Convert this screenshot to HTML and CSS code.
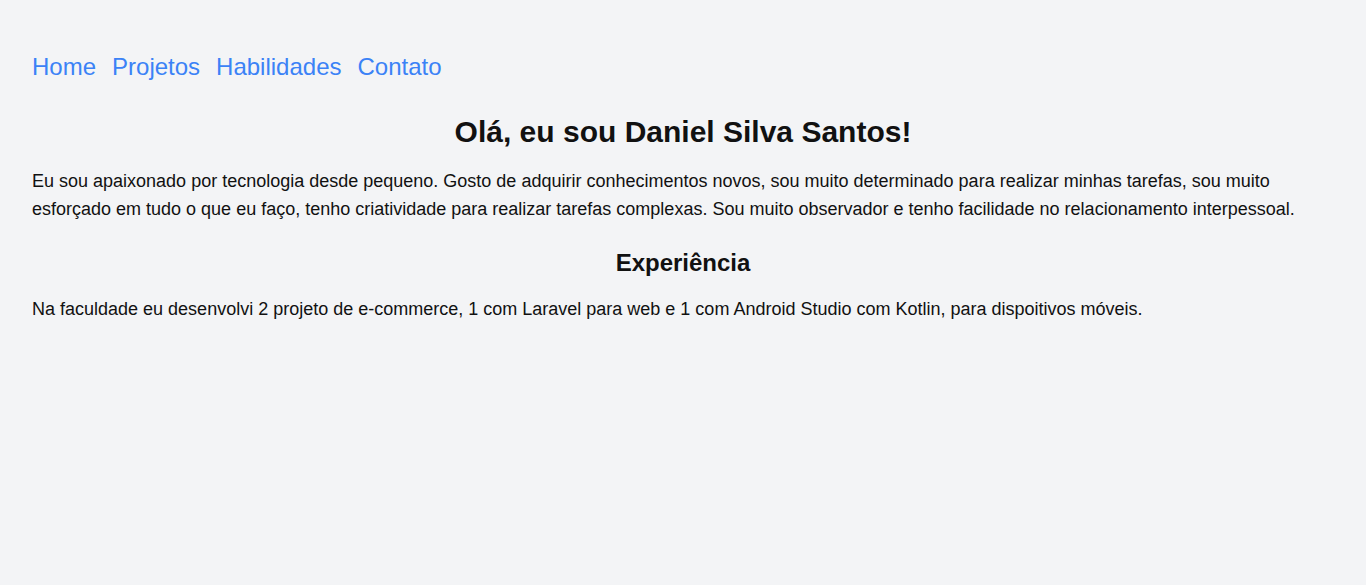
FILE: index.html
```html
<!DOCTYPE html>
<html lang="pt-BR">
<head>
<meta charset="utf-8">
<title>Daniel Silva Santos</title>
<link rel="stylesheet" href="styles.css">
</head>
<body>
<div class="page">
  <nav class="nav">
    <a href="#">Home</a>
    <a href="#">Projetos</a>
    <a href="#">Habilidades</a>
    <a href="#">Contato</a>
  </nav>
  <main class="content">
    <h1 class="title">Olá, eu sou Daniel Silva Santos!</h1>
    <p class="text">Eu sou apaixonado por tecnologia desde pequeno. Gosto de adquirir conhecimentos novos, sou muito determinado para realizar minhas tarefas, sou muito esforçado em tudo o que eu faço, tenho criatividade para realizar tarefas complexas. Sou muito observador e tenho facilidade no relacionamento interpessoal.</p>
    <h2 class="subtitle">Experiência</h2>
    <p class="text">Na faculdade eu desenvolvi 2 projeto de e-commerce, 1 com Laravel para web e 1 com Android Studio com Kotlin, para dispoitivos móveis.</p>
  </main>
</div>
</body>
</html>
```
FILE: styles.css
```css
html, body {
  margin: 0;
  padding: 0;
  background: #f3f4f6;
}
body {
  font-family: "Liberation Sans", Arial, sans-serif;
  color: #111111;
}
.page {
  padding: 51px 32px 32px;
}
.nav {
  display: flex;
  gap: 16px;
  font-size: 24px;
  line-height: 32px;
}
.nav a {
  color: #3b82f6;
  text-decoration: none;
}
.content {
  margin-top: 31px;
}
.title {
  margin: 0;
  text-align: center;
  font-size: 30px;
  line-height: 36px;
  font-weight: 700;
}
.subtitle {
  margin: 24px 0 0;
  text-align: center;
  font-size: 24px;
  line-height: 32px;
  font-weight: 700;
}
.text {
  margin: 17px 0 0;
  font-size: 18px;
  line-height: 28px;
}
.subtitle + .text {
  margin-top: 16px;
}
```
